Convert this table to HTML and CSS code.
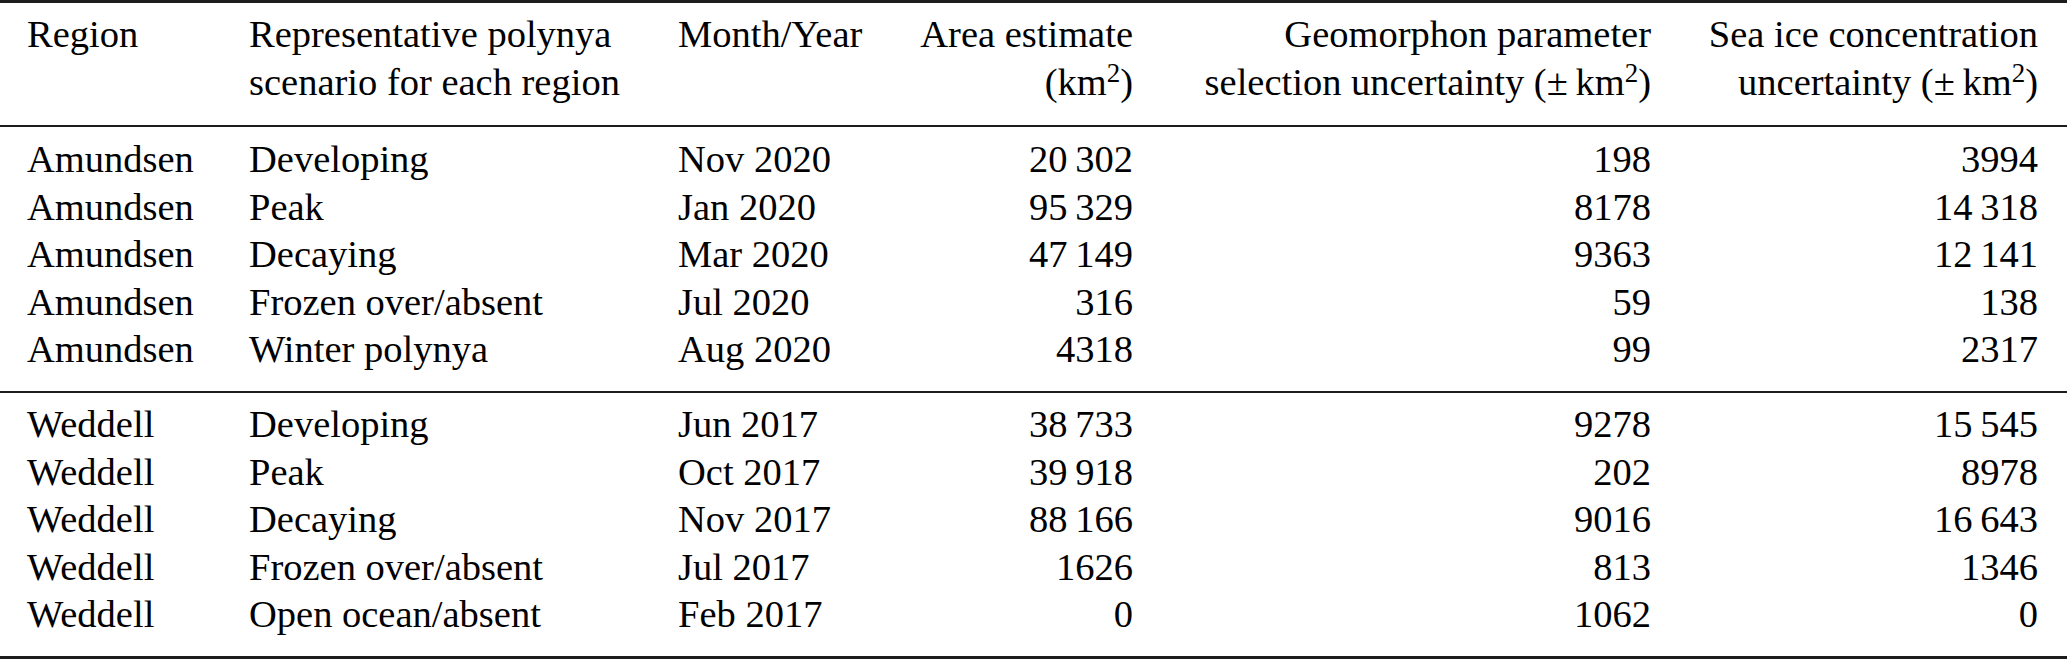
FILE: index.html
```html
<!DOCTYPE html>
<html lang="en">
<head>
<meta charset="utf-8">
<title>Polynya area estimates</title>
<link rel="stylesheet" href="styles.css">
</head>
<body>
<table class="data">
  <colgroup>
    <col class="c-region">
    <col class="c-scenario">
    <col class="c-month">
    <col class="c-area">
    <col class="c-geo">
    <col class="c-sea">
  </colgroup>
  <thead>
    <tr>
      <th class="l first">Region</th>
      <th class="l">Representative polynya<br>scenario for each region</th>
      <th class="l">Month/Year</th>
      <th class="r">Area estimate<br>(km<sup>2</sup>)</th>
      <th class="r">Geomorphon parameter<br>selection uncertainty (±&#8201;km<sup>2</sup>)</th>
      <th class="r last">Sea ice concentration<br>uncertainty (±&#8201;km<sup>2</sup>)</th>
    </tr>
  </thead>
  <tbody>
    <tr class="top">
      <td class="l first">Amundsen</td><td class="l">Developing</td><td class="l">Nov 2020</td>
      <td class="r">20&#8201;302</td><td class="r">198</td><td class="r last">3994</td>
    </tr>
    <tr>
      <td class="l first">Amundsen</td><td class="l">Peak</td><td class="l">Jan 2020</td>
      <td class="r">95&#8201;329</td><td class="r">8178</td><td class="r last">14&#8201;318</td>
    </tr>
    <tr>
      <td class="l first">Amundsen</td><td class="l">Decaying</td><td class="l">Mar 2020</td>
      <td class="r">47&#8201;149</td><td class="r">9363</td><td class="r last">12&#8201;141</td>
    </tr>
    <tr>
      <td class="l first">Amundsen</td><td class="l">Frozen over/absent</td><td class="l">Jul 2020</td>
      <td class="r">316</td><td class="r">59</td><td class="r last">138</td>
    </tr>
    <tr class="bottom">
      <td class="l first">Amundsen</td><td class="l">Winter polynya</td><td class="l">Aug 2020</td>
      <td class="r">4318</td><td class="r">99</td><td class="r last">2317</td>
    </tr>
  </tbody>
  <tbody>
    <tr class="top ruled">
      <td class="l first">Weddell</td><td class="l">Developing</td><td class="l">Jun 2017</td>
      <td class="r">38&#8201;733</td><td class="r">9278</td><td class="r last">15&#8201;545</td>
    </tr>
    <tr>
      <td class="l first">Weddell</td><td class="l">Peak</td><td class="l">Oct 2017</td>
      <td class="r">39&#8201;918</td><td class="r">202</td><td class="r last">8978</td>
    </tr>
    <tr>
      <td class="l first">Weddell</td><td class="l">Decaying</td><td class="l">Nov 2017</td>
      <td class="r">88&#8201;166</td><td class="r">9016</td><td class="r last">16&#8201;643</td>
    </tr>
    <tr>
      <td class="l first">Weddell</td><td class="l">Frozen over/absent</td><td class="l">Jul 2017</td>
      <td class="r">1626</td><td class="r">813</td><td class="r last">1346</td>
    </tr>
    <tr class="bottom">
      <td class="l first">Weddell</td><td class="l">Open ocean/absent</td><td class="l">Feb 2017</td>
      <td class="r">0</td><td class="r">1062</td><td class="r last">0</td>
    </tr>
  </tbody>
</table>
</body>
</html>
```

FILE: styles.css
```css
html, body {
  margin: 0;
  padding: 0;
  background: #ffffff;
}

body {
  font-family: "Liberation Serif", Tinos, "Nimbus Roman", "DejaVu Serif", serif;
  font-size: 38.5px;
  line-height: 47.5px;
  color: #000000;
}

.data {
  width: 2067px;
  table-layout: fixed;
  border-collapse: separate;
  border-spacing: 0;
  border-top: 3px solid #1c1c1c;
  border-bottom: 3px solid #1c1c1c;
  font-family: "Liberation Serif", Tinos, "Nimbus Roman", "DejaVu Serif", serif;
}

.c-region { width: 249px; }
.c-scenario { width: 429px; }
.c-month { width: 222px; }
.c-area { width: 233px; }
.c-geo { width: 518px; }
.c-sea { width: 416px; }

.data th,
.data td {
  padding: 0;
  font-weight: normal;
  vertical-align: top;
  white-space: nowrap;
}

.data th {
  padding-top: 8.25px;
  padding-bottom: 18.75px;
  border-bottom: 2px solid #1c1c1c;
}

.l { text-align: left; }
.r { text-align: right; }

.first { padding-left: 27px !important; }
.last { padding-right: 29px !important; }

.data tr.top td { padding-top: 9.25px; }
.data tr.ruled td {
  padding-top: 8.25px;
  border-top: 2px solid #1c1c1c;
}
.data tr.bottom td { padding-bottom: 17.25px; }

sup {
  font-size: 0.7em;
  line-height: 0;
  vertical-align: 0.5em;
}
```
